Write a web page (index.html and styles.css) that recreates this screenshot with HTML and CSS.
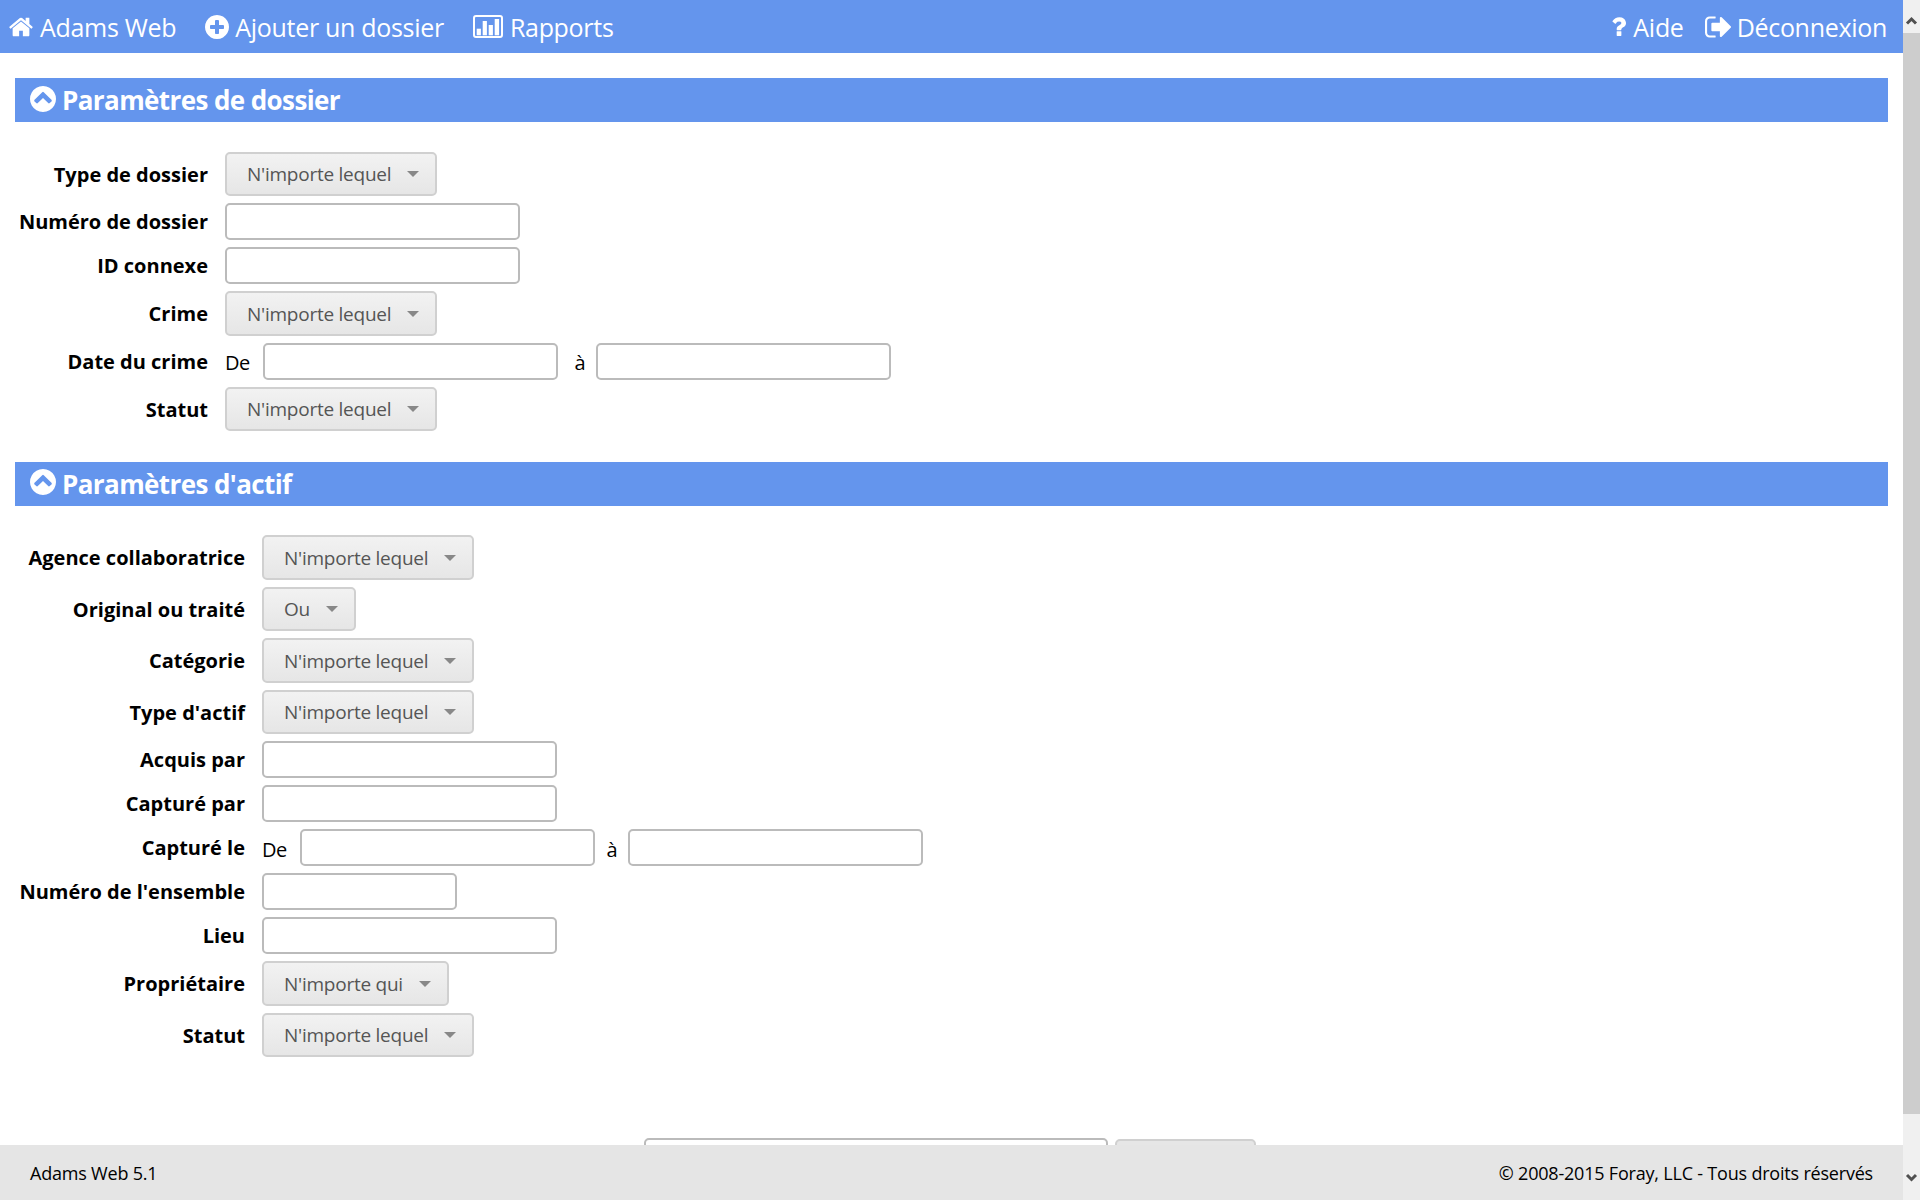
FILE: index.html
```html
<!DOCTYPE html>
<html lang="fr">
<head>
    <meta charset="UTF-8">
    <title>Adams Web</title>
    <link rel="stylesheet" href="styles.css">
</head>
<body>
    <div class="app">
        <div class="page">
            <nav class="topbar">
                <a class="nav-item nav-home">
                    <svg class="nav-icon icon-home" viewBox="0 0 1792 1792"><path d="M1472 992v480q0 26-19 45t-45 19h-384v-384h-256v384h-384q-26 0-45-19t-19-45v-480q0-1 .5-3t.5-3l575-474 575 474q1 2 1 6zm223-69l-62 74q-8 9-21 11h-3q-13 0-21-7l-692-577-692 577q-12 8-24 7-13-2-21-11l-62-74q-8-10-7-23.5t11-21.5l719-599q32-26 76-26t76 26l244 204v-195q0-14 9-23t23-9h192q14 0 23 9t9 23v408l219 182q10 8 11 21.5t-7 23.5z"/></svg>
                    Adams Web
                </a>
                <a class="nav-item">
                    <svg class="nav-icon icon-plus" viewBox="128 128 1536 1536"><path d="M1344 960v-128q0-26-19-45t-45-19h-256v-256q0-26-19-45t-45-19h-128q-26 0-45 19t-19 45v256h-256q-26 0-45 19t-19 45v128q0 26 19 45t45 19h256v256q0 26 19 45t45 19h128q26 0 45-19t19-45v-256h256q26 0 45-19t19-45zm320-64q0 209-103 385.5t-279.5 279.5-385.5 103-385.5-103-279.5-279.5-103-385.5 103-385.5 279.5-279.5 385.5-103 385.5 103 279.5 279.5 103 385.5z"/></svg>
                    Ajouter un dossier
                </a>
                <a class="nav-item">
                    <svg class="nav-icon icon-chart" viewBox="0 0 30 23"><rect x="1" y="1" width="28" height="21" rx="2" fill="none" stroke="#fff" stroke-width="2"/><rect x="3.7" y="13.7" width="4.2" height="6.6"/><rect x="9.7" y="6" width="4.2" height="14.3"/><rect x="15.7" y="10" width="4.2" height="10.3"/><rect x="21.7" y="4" width="4.4" height="16.3"/></svg>
                    Rapports
                </a>
                <div class="nav-right">
                    <a class="nav-item">
                        <svg class="nav-icon icon-help" viewBox="448 256 1024 1280"><path d="M1088 1256v240q0 16-12 28t-28 12h-240q-16 0-28-12t-12-28v-240q0-16 12-28t28-12h240q16 0 28 12t12 28zm316-600q0 54-15.5 101t-35 76.5-55 59.5-57.5 43.5-61 35.5q-41 23-68.5 65t-27.5 67q0 17-12 32.5t-28 15.5h-240q-15 0-25.5-18.5t-10.5-37.5v-45q0-83 65-156.5t143-108.5q59-27 84-56t25-76q0-42-46.5-74t-107.5-32q-65 0-108 29-35 25-107 115-13 16-31 16-12 0-25-8l-164-125q-13-10-15.5-25t5.5-28q160-266 464-266 80 0 161 31t146 83 106 127.5 41 158.5z"/></svg>
                        Aide
                    </a>
                    <a class="nav-item">
                        <svg class="nav-icon icon-logout" viewBox="64 256 1568 1280"><path d="M704 1440q0 4 1 20t.5 26.5-3 23.5-10 19.5-20.5 6.5h-320q-119 0-203.5-84.5t-84.5-203.5v-704q0-119 84.5-203.5t203.5-84.5h320q13 0 22.5 9.5t9.5 22.5q0 4 1 20t.5 26.5-3 23.5-10 19.5-20.5 6.5h-320q-66 0-113 47t-47 113v704q0 66 47 113t113 47h312l11.5 1 11.5 3 8 5.5 7 9 2 13.5zm928-544q0 26-19 45l-544 544q-19 19-45 19t-45-19-19-45v-288h-448q-26 0-45-19t-19-45v-384q0-26 19-45t45-19h448v-288q0-26 19-45t45-19 45 19l544 544q19 19 19 45z"/></svg>
                        Déconnexion
                    </a>
                </div>
            </nav>

            <main class="content">
                <h2 class="section-title">
                    <svg class="section-icon" viewBox="128 128 1536 1536"><path d="M1293 1139l102-102q19-19 19-45t-19-45l-454-454q-19-19-45-19t-45 19l-454 454q-19 19-19 45t19 45l102 102q19 19 45 19t45-19l307-307 307 307q19 19 45 19t45-19zm371-243q0 209-103 385.5t-279.5 279.5-385.5 103-385.5-103-279.5-279.5-103-385.5 103-385.5 279.5-279.5 385.5-103 385.5 103 279.5 279.5 103 385.5z"/></svg>
                    Paramètres de dossier
                </h2>
                <div class="form form-case">
                    <label>Type de dossier</label>
                    <div class="field"><button class="select">N'importe lequel<span class="caret"></span></button></div>
                    <label>Numéro de dossier</label>
                    <div class="field"><input class="input" type="text"></div>
                    <label>ID connexe</label>
                    <div class="field"><input class="input" type="text"></div>
                    <label>Crime</label>
                    <div class="field"><button class="select">N'importe lequel<span class="caret"></span></button></div>
                    <label>Date du crime</label>
                    <div class="field">
                        <span class="from">De</span><input class="input" type="text"><span class="to to-case">à</span><input class="input" type="text">
                    </div>
                    <label>Statut</label>
                    <div class="field"><button class="select">N'importe lequel<span class="caret"></span></button></div>
                </div>

                <h2 class="section-title">
                    <svg class="section-icon" viewBox="128 128 1536 1536"><path d="M1293 1139l102-102q19-19 19-45t-19-45l-454-454q-19-19-45-19t-45 19l-454 454q-19 19-19 45t19 45l102 102q19 19 45 19t45-19l307-307 307 307q19 19 45 19t45-19zm371-243q0 209-103 385.5t-279.5 279.5-385.5 103-385.5-103-279.5-279.5-103-385.5 103-385.5 279.5-279.5 385.5-103 385.5 103 279.5 279.5 103 385.5z"/></svg>
                    Paramètres d'actif
                </h2>
                <div class="form form-asset">
                    <label>Agence collaboratrice</label>
                    <div class="field"><button class="select">N'importe lequel<span class="caret"></span></button></div>
                    <label>Original ou traité</label>
                    <div class="field"><button class="select">Ou<span class="caret"></span></button></div>
                    <label>Catégorie</label>
                    <div class="field"><button class="select">N'importe lequel<span class="caret"></span></button></div>
                    <label>Type d'actif</label>
                    <div class="field"><button class="select">N'importe lequel<span class="caret"></span></button></div>
                    <label>Acquis par</label>
                    <div class="field"><input class="input" type="text"></div>
                    <label>Capturé par</label>
                    <div class="field"><input class="input" type="text"></div>
                    <label>Capturé le</label>
                    <div class="field">
                        <span class="from">De</span><input class="input" type="text"><span class="to to-asset">à</span><input class="input" type="text">
                    </div>
                    <label>Numéro de l'ensemble</label>
                    <div class="field"><input class="input input-short" type="text"></div>
                    <label>Lieu</label>
                    <div class="field"><input class="input" type="text"></div>
                    <label>Propriétaire</label>
                    <div class="field"><button class="select">N'importe qui<span class="caret"></span></button></div>
                    <label>Statut</label>
                    <div class="field"><button class="select">N'importe lequel<span class="caret"></span></button></div>
                </div>

                <div class="search-row">
                    <input class="input input-search" type="text">
                    <button class="search-button"></button>
                </div>
            </main>

            <footer class="footer">
                <span>Adams Web 5.1</span>
                <span>© 2008-2015 Foray, LLC - Tous droits réservés</span>
            </footer>
        </div>

        <div class="scrollbar">
            <svg class="scroll-arrow arrow-up" viewBox="0 0 17 17"><path d="M4 15.5 8.5 11l4.500 4.500" fill="none" stroke="#505050" stroke-width="3"/></svg>
            <div class="scroll-track"><div class="scroll-thumb"></div></div>
            <svg class="scroll-arrow arrow-down" viewBox="0 0 17 17"><path d="M4 6 8.500 10.500 13 6" fill="none" stroke="#505050" stroke-width="3"/></svg>
        </div>
    </div>
</body>
</html>
```

FILE: styles.css
```css
html, body {
    margin: 0;
    height: 100%;
    overflow: hidden;
}

body {
    font-family: "Open Sans", "Noto Sans", sans-serif;
    color: #000;
    background-color: #fff;
}

.app {
    display: flex;
    height: 100vh;
}

.page {
    flex: 1;
    min-width: 0;
    display: flex;
    flex-direction: column;
}

/* Barre du haut */
.topbar {
    flex: none;
    height: 53px;
    background-color: #6495ed;
    display: flex;
    align-items: center;
    padding: 0 16px 0 8px;
    color: #fff;
    font-size: 25px;
    letter-spacing: -0.3px;
}

.nav-item {
    display: flex;
    align-items: center;
    margin-right: 29px;
    white-space: nowrap;
}

.nav-right {
    margin-left: auto;
    display: flex;
}

.nav-right .nav-item {
    margin-right: 0;
    margin-left: 21px;
}

.nav-icon {
    fill: #fff;
    margin-right: 6px;
}

.icon-home { width: 26px; height: 26px; }
.icon-plus { width: 24px; height: 24px; }
.icon-chart { width: 30px; height: 23px; margin-right: 7px; }
.icon-help { width: 15px; height: 21px; }
.icon-logout { width: 26px; height: 22px; }

/* Contenu */
.content {
    flex: 1;
    min-height: 0;
    overflow: hidden;
    padding: 25px 15px 0;
}

.section-title {
    margin: 0;
    height: 44px;
    background-color: #6495ed;
    color: #fff;
    display: flex;
    align-items: center;
    padding-left: 15px;
    font-size: 26px;
    font-weight: 700;
    letter-spacing: -0.6px;
}

.section-icon {
    width: 26px;
    height: 26px;
    fill: #fff;
    margin-right: 6px;
    margin-top: -3px;
}

.form {
    display: grid;
    row-gap: 7px;
    column-gap: 17px;
    align-items: center;
    justify-content: start;
    padding: 29.75px 0 30.25px;
}

.form-case { grid-template-columns: 193px auto; }
.form-asset { grid-template-columns: 230px auto; }

.form label {
    text-align: right;
    font-size: 20px;
    font-weight: 700;
    white-space: nowrap;
}

.field {
    display: flex;
    align-items: center;
    font-size: 20px;
    letter-spacing: -0.4px;
}

.input {
    box-sizing: border-box;
    width: 294.5px;
    height: 37px;
    margin: 0;
    padding: 0 8px;
    border: 2px solid #bbb;
    border-radius: 5px;
    background-color: #fff;
}

.input-short { width: 195px; }

.from {
    width: 38px;
    flex: none;
    margin-top: 3px;
}

.to {
    flex: none;
    margin-top: 3px;
}

.to-case { margin-left: 17px; margin-right: 11px; }
.to-asset { margin-left: 12px; margin-right: 11px; }

.select {
    box-sizing: border-box;
    height: 44.5px;
    margin: 0;
    padding: 0 16px 0 20px;
    display: flex;
    align-items: center;
    border: 2px solid #d0d0d0;
    border-radius: 5px;
    background: linear-gradient(#f2f2f2, #e6e6e6);
    color: #555;
    font-family: inherit;
    font-size: 19px;
    letter-spacing: -0.25px;
}

.caret {
    margin-left: 16px;
    width: 0;
    height: 0;
    border-left: 6px solid transparent;
    border-right: 6px solid transparent;
    border-top: 6px solid #888;
}

/* Ligne coupée par le pied de page */
.search-row {
    display: flex;
    align-items: flex-start;
    gap: 7px;
    padding: 50px 0 0 629px;
}

.input-search {
    width: 464px;
    height: 46px;
}

.search-button {
    width: 141px;
    height: 45px;
    margin: 1px 0 0;
    padding: 0;
    border: 2px solid #d0d0d0;
    border-radius: 5px;
    background-color: #e6e6e6;
}

/* Pied de page */
.footer {
    flex: none;
    height: 55px;
    background-color: #e5e5e5;
    display: flex;
    align-items: center;
    justify-content: space-between;
    padding: 0 30px;
    font-size: 18px;
    letter-spacing: -0.2px;
}

/* Barre de défilement */
.scrollbar {
    flex: none;
    width: 17px;
    display: flex;
    flex-direction: column;
    background-color: #f0f0f0;
}

.scroll-arrow {
    flex: none;
    width: 17px;
    height: 17px;
}

.arrow-up { margin: 8px 0; }
.arrow-down { margin-bottom: 14px; }

.scroll-track {
    flex: 1;
    min-height: 0;
}

.scroll-thumb {
    height: 1081px;
    background-color: #cdcdcd;
}
```
